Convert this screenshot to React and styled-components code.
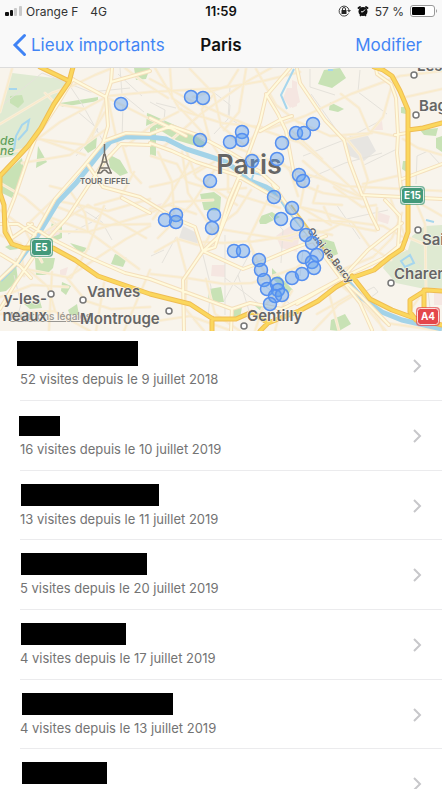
import React from "react";
import styled, { createGlobalStyle } from "styled-components";

const GlobalStyle = createGlobalStyle`
  * {
    box-sizing: border-box;
  }

  body {
    margin: 0;
    background: #ffffff;
    font-family: Inter, "Liberation Sans", sans-serif;
  }

  button {
    font: inherit;
    border: none;
    background: none;
    padding: 0;
    cursor: pointer;
  }
`;

const Screen = styled.div`
  display: flex;
  flex-direction: column;
  height: 100vh;
`;

const TopBar = styled.header`
  background: #f9f9f9;
  border-bottom: 1px solid #dcdcdc;
`;

const StatusBar = styled.div`
  display: grid;
  grid-template-columns: 1fr auto 1fr;
  align-items: center;
  height: 22px;
  padding: 0 4px;
  font-size: 12px;
  color: #333333;
`;

const StatusGroup = styled.div`
  display: flex;
  align-items: center;
  justify-content: ${(props) => (props.$end ? "flex-end" : "flex-start")};
  gap: ${(props) => (props.$end ? "6px" : "4px")};
`;

const Network = styled.span`
  margin-left: 8px;
`;

const Clock = styled.time`
  color: #111111;
  font-size: 13px;
  font-weight: 600;
`;

const NavBar = styled.nav`
  display: grid;
  grid-template-columns: 1fr auto 1fr;
  align-items: center;
  height: 45px;
  padding: 0 12px;
  font-size: 17px;
`;

const NavButton = styled.button`
  display: flex;
  align-items: center;
  gap: 4px;
  justify-self: ${(props) => (props.$end ? "end" : "start")};
  padding-right: ${(props) => (props.$end ? "8px" : "0")};
  color: #4285f5;
  white-space: nowrap;
`;

const Title = styled.h1`
  margin: 0;
  font-size: 17px;
  font-weight: 600;
  color: #111111;
`;

const MapView = styled.svg`
  display: block;
  flex: none;
  width: 100%;
  background: #f8f4ec;
  font-family: Inter, "Liberation Sans", sans-serif;
`;

const PlaceLabel = styled.text`
  font-size: ${(props) => props.$size}px;
  font-weight: 600;
  fill: #666666;
  stroke: #fbf8f1;
  stroke-width: 1px;
  paint-order: stroke;
`;

const WoodLabel = styled.text`
  font-size: 12px;
  font-style: italic;
  font-weight: 500;
  fill: #5fa05b;
`;

const LegalLink = styled.a`
  font-size: 10px;
  font-weight: 500;
  fill: #999792;
  text-decoration: underline;
`;

const List = styled.ul`
  flex: 1;
  min-height: 0;
  margin: 0;
  padding: 0;
  list-style: none;
  overflow-y: auto;
  scrollbar-width: none;
`;

const Item = styled.li`
  position: relative;
  height: 70px;

  &:nth-child(3n) {
    height: 69px;
  }

  &::after {
    content: "";
    position: absolute;
    right: 0;
    bottom: 0;
    left: 20px;
    height: 1px;
    background: #ebebed;
  }
`;

const Row = styled.button`
  display: flex;
  align-items: center;
  justify-content: space-between;
  width: 100%;
  height: 100%;
  padding-right: 20px;
  text-align: left;
`;

const RowText = styled.span`
  display: flex;
  flex-direction: column;
  align-self: flex-start;
  gap: 4px;
`;

const NameSlot = styled.span`
  display: flex;
  align-items: flex-end;
  height: 35px;
  padding-left: ${(props) => props.$inset}px;
`;

const HiddenName = styled.span`
  width: ${(props) => props.$width}px;
  height: ${(props) => props.$height}px;
  background: #000000;
`;

const Visits = styled.span`
  padding-left: 20px;
  font-size: 13px;
  line-height: 18px;
  color: #737373;
`;

const visits = [
  { text: "52 visites depuis le 9 juillet 2018", inset: 17, width: 121, height: 25 },
  { text: "16 visites depuis le 10 juillet 2019", inset: 19, width: 41, height: 20 },
  { text: "13 visites depuis le 11 juillet 2019", inset: 21, width: 138, height: 22 },
  { text: "5 visites depuis le 20 juillet 2019", inset: 21, width: 126, height: 22 },
  { text: "4 visites depuis le 17 juillet 2019", inset: 21, width: 105, height: 22 },
  { text: "4 visites depuis le 13 juillet 2019", inset: 22, width: 151, height: 22 },
  { inset: 22, width: 85, height: 22 },
];

const pins = [
  [121, 104], [191, 97], [203, 98], [200, 140], [230, 142], [242, 132],
  [242, 140], [252, 161], [277, 159], [282, 143], [210, 181], [274, 197],
  [296, 133], [304, 133], [313, 124], [299, 175], [303, 181], [165, 220],
  [176, 215], [176, 222], [214, 215], [212, 228], [234, 251], [243, 251],
  [259, 260], [261, 270], [264, 280], [267, 289], [277, 284], [278, 290],
  [275, 296], [282, 295], [270, 304], [281, 219], [292, 208], [297, 224],
  [292, 278], [306, 235], [312, 243], [304, 257], [317, 255], [312, 262],
  [314, 268], [302, 274],
];

const woods = [
  "M12 73L70 80L62 98L40 130L27 148L14 156L0 158V112Z",
  "M442 225L425 226L412 236L408 250L388 258L383 268L396 283L420 288H442Z",
];

const parks = [
  "M22 158L24 172L12 198L2 193L2 176Z",
  "M10 96L22 95L24 102L18 108L10 103Z",
  "M60 103L98 97V101L62 107Z",
  "M38 146L47 162L36 168Z",
  "M88 138L97 136L96 148L88 153L84 148Z",
  "M108 154L120 160L128 173L120 176L110 168Z",
  "M147 113L150 114L188 131L206 143L203 148L176 140L150 124L146 126Z",
  "M150 120L156 121V157L150 156Z",
  "M134 68H150L146 79L136 80Z",
  "M200 194L214 192L221 197L220 211L204 210Z",
  "M324 70L340 68L346 78L332 88L318 84Z",
  "M330 102L336 105L344 109L338 112L329 110Z",
  "M35 258L55 258L53 268L46 275H36Z",
  "M52 222L62 224L62 238L55 241L50 232Z",
  "M70 243L90 249L80 253Z",
  "M115 254L127 258L123 267L111 264Z",
  "M62 282L71 286L66 295L61 291Z",
  "M68 310L77 304L79 315L70 315Z",
  "M24 304L40 301L42 308L30 309Z",
  "M0 278L16 265L18 280L6 291L0 292Z",
  "M5 247L13 243L18 249L10 250Z",
  "M209 289L221 287L224 302L208 302Z",
  "M272 268L293 290L290 296L272 278Z",
  "M258 217L272 212L280 217L266 224L260 224Z",
  "M320 238L334 242L338 254L328 258L318 246Z",
  "M331 320L345 314L351 324L339 331L330 330Z",
  "M420 130L438 128L436 136L424 135Z",
  "M436 138L442 136V152L436 148Z",
  "M401 107H406V114L401 113Z",
  "M403 161H408V173L402 169Z",
  "M234 309L242 307L240 318H233Z",
  "M255 306L266 305L262 312Z",
];

const pinkAreas = [
  "M287 88L297 88L300 102L290 108L283 98Z",
  "M276 236L290 226L300 232L297 252L281 248Z",
  "M212 265L225 265V277L211 276Z",
  "M376 123L382 121L383 130H373Z",
  "M292 80L297 82V106L292 108Z",
  "M46 230L56 226L60 234L50 238Z",
  "M60 270L68 267L66 275L60 276Z",
  "M377 212L390 216L388 224L378 221Z",
  "M434 293H442V305H434Z",
  "M150 207L162 203L158 211L150 214Z",
];

const water = [
  "M0 280L18 262L36 238L58 202L76 183L100 153L110 142L125 137H150L166 139L186 149L208 156L226 162L238 171L248 180L266 187L278 194L288 209L312 238L330 260L348 282L362 298L382 312L402 320L442 329",
];

const streams = [
  "M14 150L16 136L22 125L29 120L27 130L18 140",
  "M9 89H17",
  "M294 69L281 95L287 109",
  "M250 184L254 173L266 176L274 184",
  "M401 261L410 255L414 263L405 267Z",
  "M426 220L434 222",
  "M328 70H333",
];

const minorRoads = [
  "M0 124L52 93L72 86L95 75L112 68", "M12 69L0 112", "M0 153L28 149",
  "M36 140L60 122L106 97", "M38 139L85 145L105 112", "M40 139L85 155",
  "M22 163L70 155L105 130", "M45 93L56 104L85 109", "M77 83L106 98L92 137",
  "M108 99L118 146", "M108 98L150 119L164 125", "M108 96L150 92",
  "M150 92L222 88L263 81L300 72", "M150 79L192 101L245 124L298 142",
  "M155 68L180 110L222 123L262 127", "M181 109L210 141L220 156",
  "M170 69L172 98L198 116", "M178 112L152 125L126 146",
  "M190 69L214 94L221 126L244 145", "M238 70L228 86L193 97",
  "M246 69L239 112L224 130", "M256 69L276 105L299 123",
  "M271 68L246 82L202 113L162 148", "M214 94L202 109", "M202 110L210 141",
  "M260 132L305 116L351 94L400 76L442 71", "M292 119L330 136L372 133",
  "M341 94L359 108L369 131L395 136", "M391 88L383 117L369 134L343 140",
  "M345 137L360 155L368 180L362 196", "M292 136L326 164L362 198",
  "M296 171L345 186L442 191", "M292 131L322 159", "M397 176L363 184",
  "M403 139L418 148L442 155", "M406 97L442 89",
  "M50 186L70 191L85 213L88 232", "M28 224L53 200L108 211L150 199",
  "M51 231L88 232L148 214", "M40 235L88 205L146 238", "M44 215L89 232L139 269",
  "M50 204L104 225L150 224", "M104 206L88 248L71 278L30 270L8 259",
  "M150 226L126 239L94 260L67 278", "M67 278L86 301L111 309L150 307",
  "M0 314L54 311L90 331", "M0 297L32 285L68 287", "M16 259L48 287L55 311",
  "M52 272L49 330", "M104 283L96 331", "M150 270L124 331", "M0 210L24 228L42 262",
  "M151 156L177 164L187 182L214 190L246 188", "M158 152L172 182L174 213",
  "M186 150L196 177L237 205", "M190 161L168 199L153 219",
  "M182 152L188 193L216 235", "M150 187L173 182L206 164", "M214 162L194 174",
  "M215 169L192 204L158 238", "M228 165L228 192L280 208",
  "M251 190L237 212L212 231L188 275", "M203 242L224 243L250 241",
  "M250 242L288 236L310 229L332 235", "M270 195L248 240L258 262L282 299",
  "M229 197L219 229L292 241", "M150 209L170 205L196 214", "M177 238L187 275L184 324",
  "M151 274L187 278L224 284L252 283", "M252 283L296 268L310 258",
  "M155 252L178 239L198 245", "M152 212L175 202L213 200",
  "M303 161L319 175L342 189L364 198", "M300 207L323 212L352 222L383 226L403 237",
  "M324 207L331 222L365 229L376 231L377 208", "M334 187L362 207L376 205",
  "M309 220L352 222L369 246L391 260", "M294 239L329 230L342 223",
  "M339 271L373 257L392 238L402 213", "M391 200L405 236L426 245",
  "M415 200L425 224L426 288L411 309", "M414 200L442 216",
  "M342 286L364 294L384 331", "M317 314L354 293L386 331",
  "M313 331L338 305L356 294", "M328 289L339 331", "M342 286L386 323L442 331",
  "M305 182L300 207L331 225", "M318 186L313 203L342 205",
  "M150 322L190 316L232 331", "M184 307L204 331", "M206 279L215 314L240 331",
  "M255 331L262 309L276 293", "M275 331L280 311L292 291",
  "M279 159L290 171L298 196", "M231 137L245 145L259 131", "M235 147L260 157L290 168",
  "M125 68L146 84L168 98", "M134 172L120 198L95 205", "M123 147L131 172L141 183",
  "M0 183L24 197L54 223", "M0 235L21 244L24 276", "M295 182L323 193L362 199",
];

const majorRoads = [
  "M14 199L28 158L36 137L56 107L73 79", "M74 80L106 97L108 126L103 143L84 166L55 199L38 229L17 263L0 279",
  "M0 309L15 284L38 250L67 218L104 162L121 144L150 145",
  "M112 68L111 82L106 97", "M111 82L150 71", "M104 141L126 133L150 134",
  "M150 134L171 126L197 135L231 153L248 163", "M150 143L172 151L196 162L236 175L280 200",
  "M150 118L171 128L186 136", "M290 68L266 96L260 122L246 160L229 200L215 247L203 251L183 280L184 331",
  "M240 183L218 237L203 251", "M266 94L278 114L286 131L295 180",
  "M260 131L280 120L292 116", "M297 69L300 83L325 120L344 140L350 163L362 195L442 199",
  "M364 197L371 215L378 229", "M376 68L377 74L391 84L396 98L398 134L397 153L402 197",
  "M395 135L407 133", "M402 179L442 164", "M28 224L52 239L88 257L125 273L150 279L232 309L250 303L282 309L308 296L342 278L384 258L406 240",
  "M203 251L243 269L259 263L292 249L326 236", "M203 251L195 227L176 219L140 197L103 187L88 165",
  "M32 224L12 238L6 219L14 199", "M0 254L20 266L31 278", "M122 198L150 213",
  "M273 185L291 211L314 242L342 280L360 303L372 330",
  "M246 165L259 171L278 188", "M297 304L342 278L368 250L402 223",
  "M232 309L231 331", "M0 224L18 224L35 235", "M342 279L361 296L389 325",
  "M383 262L398 247L400 216L385 200",
];

const highways = [
  "M73 67L69 82L54 104L41 128L28 146L17 158L0 176M0 176V193L4 205L5 232L12 244L24 248H53L75 260L98 276L150 294L190 304L213 319H236L252 312L268 323L299 311L318 301L336 287L354 277L374 270L390 257L402 249L408 232L408 206V110L400 91L392 76L383 70L374 67",
  "M40 67L67 80", "M408 130L423 128L442 123", "M352 276L370 299L392 310L414 318L442 325",
  "M442 291L426 290L410 300L410 312L416 320", "M424 290V318", "M212 318V331",
  "M268 323L260 331",
];

const streets = [
  "M0 107L42 73L90 92L130 88", "M120 68L122 94L144 112", "M118 74L142 96",
  "M123 104L122 140", "M78 112L98 129L76 156", "M70 86L82 104L104 143",
  "M150 102L165 110L163 130", "M156 103L176 108", "M203 84L230 105L229 118L246 129",
  "M230 86L228 119L214 134", "M303 156L344 140L380 121", "M300 182L345 163L382 153",
  "M362 166L397 149", "M342 138L321 108L311 94", "M310 69V87L335 95",
  "M360 70L358 92L387 114", "M416 184L417 156L428 151L440 164", "M77 206L102 222L112 240",
  "M68 234L92 222L106 208", "M14 275L21 304L16 322", "M203 255L211 287L208 317",
  "M225 235V315", "M238 275L250 314", "M251 251L224 301", "M249 237L259 282L289 303",
  "M225 278L258 303", "M269 215L283 230L281 263", "M303 250L300 276",
  "M360 239L336 204", "M342 220L388 210", "M366 291L374 287L378 292L370 298Z",
  "M400 244L422 267", "M428 291L430 308", "M151 256L164 250", "M162 263L176 237",
];

const towns = [
  [414, 75], [416, 115], [418, 230], [391, 283], [51, 294], [83, 300], [169, 311], [244, 326],
];

const shields = [
  { name: "E5", x: 30, y: 238, width: 23, color: "#42997a" },
  { name: "E15", x: 400, y: 186, width: 25, color: "#42997a" },
  { name: "A4", x: 416, y: 307, width: 24, color: "#e4474c" },
];

function Roads({ paths, edge, fill, width }) {
  return (
    <g fill="none" strokeLinejoin="round" strokeLinecap="round">
      <path d={paths.join("")} stroke={edge} strokeWidth={width + 2} />
      <path d={paths.join("")} stroke={fill} strokeWidth={width} />
    </g>
  );
}

function Shield({ name, x, y, width, color }) {
  return (
    <g>
      <rect x={x} y={y} width={width} height="19" rx="4" fill={color} opacity="0.7" />
      <rect x={x + 1.5} y={y + 1.5} width={width - 3} height="16" rx="3" fill={color} stroke="#ffffff" strokeOpacity="0.8" />
      <text x={x + width / 2} y={y + 13} textAnchor="middle" fontSize="10" fontWeight="700" fill="#ffffff">
        {name}
      </text>
    </g>
  );
}

function ParisMap() {
  return (
    <MapView viewBox="0 68 442 263" role="img" aria-label="Carte de Paris">
      <path d={woods.join("")} fill="#dfead2" />
      <path d={parks.join("")} fill="#c8e2b5" />
      <path d={pinkAreas.join("")} fill="#f5e6e1" />
      <path d="M347 143L354 134L368 136L376 151L364 161L347 155Z" fill="#e7e5e1" />
      <path d="M183 226L197 233L198 246L179 238Z" fill="#e7e5e1" />
      <path d={streets.join("")} fill="none" stroke="#e5e2db" strokeWidth="1" />
      <Roads paths={minorRoads} edge="#f8edd9" fill="#faebc8" width={1} />
      <path d={water.join("")} fill="none" stroke="#a3d3e8" strokeWidth="5" />
      <path d={streams.join("")} fill="none" stroke="#a6d6ed" strokeWidth="2" />
      <Roads paths={majorRoads} edge="#f4dfbd" fill="#fffadc" width={2} />
      <path d="M291 205L349 283" stroke="#edcb70" strokeWidth="2" />
      <Roads paths={highways} edge="#efbd53" fill="#fbd75d" width={3} />

      <g fill="#ffffff" stroke="#777777" strokeWidth="1.5">
        {towns.map(([x, y]) => (
          <circle key={`${x}-${y}`} cx={x} cy={y} r="3" />
        ))}
      </g>

      {shields.map((shield) => (
        <Shield key={shield.name} {...shield} />
      ))}

      <path
        d="M104.500 144V155M104 154L102 163L98 173M105 154L107 163L111 173M102 162H107M100 168H109M101 173Q104.500 167 108 173M97 173H101M108 173H112"
        fill="none"
        stroke="#77716a"
        strokeWidth="1.5"
      />
      <PlaceLabel $size={8} x="105" y="184" textAnchor="middle">TOUR EIFFEL</PlaceLabel>
      <WoodLabel x="0" y="145">de</WoodLabel>
      <WoodLabel x="0" y="155">ne</WoodLabel>

      <LegalLink href="#mentions">
        <text x="10" y="320">Mentions légales</text>
      </LegalLink>
      <PlaceLabel $size={15} x="417" y="71">Les</PlaceLabel>
      <PlaceLabel $size={15} x="419" y="111">Bag</PlaceLabel>
      <PlaceLabel $size={15} x="422" y="245">Sai</PlaceLabel>
      <PlaceLabel $size={15} x="394" y="279">Charen</PlaceLabel>
      <PlaceLabel $size={15} x="87" y="297">Vanves</PlaceLabel>
      <PlaceLabel $size={15} x="80" y="324">Montrouge</PlaceLabel>
      <PlaceLabel $size={15} x="247" y="321">Gentilly</PlaceLabel>
      <PlaceLabel $size={15} x="47" y="304" textAnchor="end">y-les-</PlaceLabel>
      <PlaceLabel $size={15} x="47" y="321" textAnchor="end">neaux</PlaceLabel>
      <PlaceLabel $size={10} transform="translate(307 231) rotate(52)">Quai de Bercy</PlaceLabel>
      <PlaceLabel $size={27} x="249" y="174" textAnchor="middle">Paris</PlaceLabel>

      <g fill="#5b9df0" fillOpacity="0.42" stroke="#558ff0" strokeWidth="1.5">
        {pins.map(([x, y]) => (
          <circle key={`${x}-${y}`} cx={x} cy={y} r="6.500" />
        ))}
      </g>
    </MapView>
  );
}

function SignalIcon() {
  return (
    <svg width="18" height="10" viewBox="0 0 18 10" aria-hidden="true">
      <rect x="1" y="6" width="4" height="4" rx="1" fill="#111111" />
      <rect x="6" y="4" width="3" height="6" rx="1" fill="#111111" />
      <rect x="10" y="2" width="3" height="8" rx="1" fill="#c9c9c9" />
      <rect x="15" y="0" width="3" height="10" rx="1" fill="#c9c9c9" />
    </svg>
  );
}

function RotationLockIcon() {
  return (
    <svg width="13" height="12" viewBox="0 0 13 12" aria-hidden="true">
      <path d="M10.500 8.500A5 5 0 1 1 11 5" fill="none" stroke="#444444" />
      <path d="M9 5H13L11 7.500Z" fill="#444444" />
      <rect x="3.500" y="5" width="5" height="4" rx="0.500" fill="#222222" />
      <path d="M4.500 5V4A1.500 1.500 0 0 1 7.500 4V5" fill="none" stroke="#333333" />
    </svg>
  );
}

function AlarmIcon() {
  return (
    <svg width="12" height="12" viewBox="0 0 12 12" aria-hidden="true">
      <circle cx="6" cy="6.500" r="4.500" fill="#111111" />
      <path d="M1.500 3L3 2M10.500 3L9 2" stroke="#111111" strokeWidth="2" strokeLinecap="round" />
      <path d="M3 11L4 10M9 11L8 10" stroke="#111111" strokeWidth="1.500" />
      <path d="M8 4.500L6 6.800H4" fill="none" stroke="#f9f9f9" />
    </svg>
  );
}

function BatteryIcon() {
  return (
    <svg width="28" height="12" viewBox="0 0 28 12" aria-hidden="true">
      <rect x="0.500" y="0.500" width="24" height="11" rx="2.500" fill="#ffffff" stroke="#999999" />
      <rect x="2" y="2" width="13" height="8" rx="1" fill="#000000" />
      <path d="M26 4Q28 6 26 8Z" fill="#999999" />
    </svg>
  );
}

function BackIcon() {
  return (
    <svg width="15" height="24" viewBox="0 0 15 24" aria-hidden="true">
      <path d="M12.500 2.500L3 12L12.500 21.500" fill="none" stroke="#3f83f5" strokeWidth="3" strokeLinecap="round" />
    </svg>
  );
}

function ChevronIcon() {
  return (
    <svg width="10" height="14" viewBox="0 0 10 14" aria-hidden="true">
      <path d="M2 1L8 7L2 13" fill="none" stroke="#c7c7ca" strokeWidth="2" />
    </svg>
  );
}

function App() {
  return (
    <>
      <GlobalStyle />
      <Screen>
        <TopBar>
          <StatusBar>
            <StatusGroup>
              <SignalIcon />
              <span>Orange F</span>
              <Network>4G</Network>
            </StatusGroup>
            <Clock>11:59</Clock>
            <StatusGroup $end>
              <RotationLockIcon />
              <AlarmIcon />
              <span>57 %</span>
              <BatteryIcon />
            </StatusGroup>
          </StatusBar>
          <NavBar>
            <NavButton>
              <BackIcon />
              Lieux importants
            </NavButton>
            <Title>Paris</Title>
            <NavButton $end>Modifier</NavButton>
          </NavBar>
        </TopBar>
        <ParisMap />
        <List>
          {visits.map((visit, index) => (
            <Item key={index}>
              <Row aria-label={visit.text || "Lieu"}>
                <RowText>
                  <NameSlot $inset={visit.inset}>
                    <HiddenName $width={visit.width} $height={visit.height} />
                  </NameSlot>
                  {visit.text && <Visits>{visit.text}</Visits>}
                </RowText>
                <ChevronIcon />
              </Row>
            </Item>
          ))}
        </List>
      </Screen>
    </>
  );
}

export default App;
